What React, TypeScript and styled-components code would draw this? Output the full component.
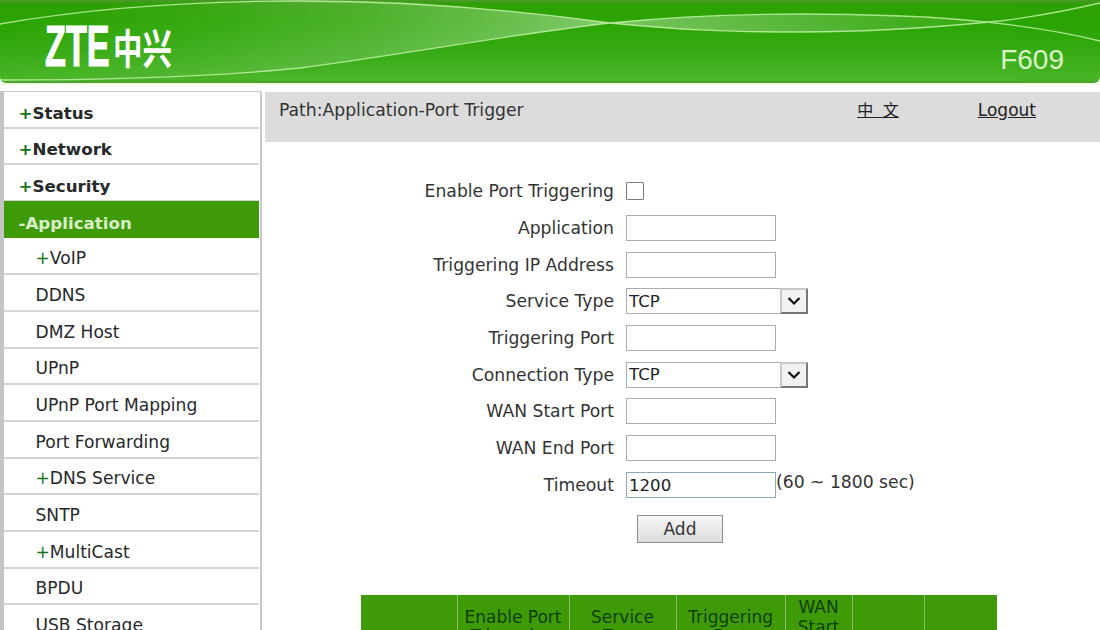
import React from "react";
import styled, { createGlobalStyle } from "styled-components";

const Global = createGlobalStyle`
  html, body { margin: 0; padding: 0; height: 630px; overflow: hidden; background: #fff; }
  body { font-family: "DejaVu Sans", Verdana, sans-serif; color: #222; }
`;
const Page = styled.div`width: 1100px; height: 630px; overflow: hidden;`;
const Banner = styled.header`
  position: relative; height: 83px; overflow: hidden;
  border-radius: 0 0 6px 6px;
  background: linear-gradient(180deg, #4c9a2a 0, #2fa106 4px, #2aa402 22px, #36aa14 50px, #4ab528 80px, #4a9e30 83px);
`;
const Tint = styled.div`height: 2px; background: #eefae4;`;
const Waves = styled.svg`position: absolute; inset: 0; width: 1100px; height: 83px;`;
const Logo = styled.div`
  position: absolute; left: 45px; top: 20px; display: flex; align-items: center; height: 52px; color: #fff;
`;
const LogoLatin = styled.span`
  display: block; width: 68px; font: 700 58px/52px "Liberation Sans", Arial, sans-serif;
  transform: scaleX(0.59); transform-origin: left center;
  -webkit-text-stroke: 1.2px #fff; white-space: nowrap;
`;
const LogoCjk = styled.span`
  display: block; width: 59px; font: 700 41px/52px "Noto Sans CJK SC", sans-serif;
  transform: scaleX(0.72); transform-origin: left center; white-space: nowrap;
`;
const Model = styled.div`
  position: absolute; right: 36px; top: 44px;
  font: 28px "Liberation Sans", Arial, sans-serif; color: #d9f5c8;
`;
const Body = styled.div`display: flex; margin-top: 6px; align-items: flex-start;`;
const Side = styled.nav`
  width: 256px; flex: none; margin-right: 3px;
  border-top: 1.5px solid #c9c9c9; border-left: 4px solid #c4c4c4; border-right: 2px solid #c9c9c9;
`;
const Item = styled.a<{ $top?: boolean; $on?: boolean }>`
  display: flex; align-items: center; box-sizing: border-box;
  height: ${p => (p.$on ? "37.17px" : "36.67px")};
  margin-top: ${p => (p.$on ? "-0.5px" : "0")};
  padding: ${p => (p.$on ? "6px" : p.$top ? "7px" : "5px")} 0 0 ${p => (p.$top ? "14.5px" : "31.5px")};
  margin-right: 1px;
  border-bottom: ${p => (p.$on ? "1px solid #fff" : "2px solid #d4d4d4")};
  background-clip: padding-box;
  font-size: ${p => (p.$top ? "16.7px" : "17.1px")};
  font-weight: ${p => (p.$top ? 700 : 400)};
  color: ${p => (p.$on ? "#d8efc8" : "#26282a")};
  background-color: ${p => (p.$on ? "#3f9a08" : "transparent")};
  white-space: nowrap;
`;
const Plus = styled.span`color: #17741b;`;
const Main = styled.main`flex: 1; min-width: 0;`;
const PathBar = styled.div`
  height: 50px; box-sizing: border-box; padding: 7px 64px 0 14px;
  margin-top: 1px;
  background: #dcdcdc; display: flex; align-items: baseline; font-size: 17.2px; color: #333;
`;
const PathText = styled.div`flex: 1;`;
const TopLink = styled.a<{ $gap: number }>`
  text-decoration: underline; color: #222; margin-left: ${p => p.$gap}px; white-space: pre;
  font-size: 17px; line-height: 20px;
`;
const LangLink = styled(TopLink)`
  font-family: "Noto Sans CJK SC", sans-serif; font-size: 16px; word-spacing: 6px;
`;
const Form = styled.form`margin-top: 31px; display: flex; flex-direction: column;`;
const Row = styled.div`
  display: grid; grid-template-columns: 349px auto; column-gap: 12px; height: 36.7px; align-items: center;
`;
const Label = styled.label`text-align: right; font-size: 17.2px; color: #333; white-space: nowrap;`;
const Control = styled.div`display: flex; align-items: center; font-size: 17.2px; color: #333;`;
const Check = styled.input`
  appearance: none; box-sizing: border-box; width: 18px; height: 18px; margin: 0;
  border: 1px solid #7a7a7a; background: #fff; border-radius: 1px;
`;
const Text = styled.input<{ $blue?: boolean }>`
  box-sizing: border-box; width: 150px; height: 26px; margin: 0; padding: 2px 2px 0; outline: 0;
  border: 1.5px solid ${p => (p.$blue ? "#8fa9bb" : "#a6adb3")}; background: #fff; color: #222;
  font: 16.6px "DejaVu Sans", Verdana, sans-serif;
`;
const SelectWrap = styled.div`position: relative; width: 182px; height: 26px;`;
const Select = styled.select`
  appearance: none; box-sizing: border-box; width: 100%; height: 100%; margin: 0; padding: 0 2px; outline: 0;
  border: 1.5px solid #a6adb3; border-radius: 0; background: #fff; color: #222;
  font: 16.6px "DejaVu Sans", Verdana, sans-serif;
`;
const Arrow = styled.span`
  position: absolute; right: 0; top: 0; width: 28px; height: 26px; box-sizing: border-box;
  display: flex; align-items: center; justify-content: center; pointer-events: none;
  background: #f2f2f2;
  border: 2px solid; border-color: #c8c8c8 #777 #777 #c8c8c8;
`;
const Hint = styled.span`margin-top: -5px; white-space: nowrap;`;
const AddRow = styled.div`padding: 12px 0 0 372px;`;
const AddButton = styled.button`
  display: block; box-sizing: border-box; width: 86px; height: 28px; padding: 0;
  border: 1px solid #8b8b8b; background: linear-gradient(180deg, #f7f7f7, #dcdcdc);
  font: 17px "DejaVu Sans", Verdana, sans-serif; color: #333;
`;
const Table = styled.table`
  margin: 52px 0 0 96px; width: 636px; table-layout: fixed; border-collapse: collapse;
`;
const Th = styled.th<{ $w: number }>`
  box-sizing: border-box;
  width: ${p => p.$w}px; background: #3f9a08; color: #0f3f0c;
  border-left: 1px solid #8cb878; font-size: 17px; font-weight: 400; line-height: 19.5px;
  padding: 3px 2px 1px; vertical-align: middle; height: 62px; white-space: pre-line;
  &:first-child { border-left: 0; }
`;

const dropdown = (
  <Arrow>
    <svg width="16" height="10" viewBox="0 0 16 10">
      <path d="M2.5 2 8 7.5 13.5 2" fill="none" stroke="#111" strokeWidth="2.2" />
    </svg>
  </Arrow>
);
const nav: [string, boolean][] = [
  ["VoIP", true], ["DDNS", false], ["DMZ Host", false], ["UPnP", false],
  ["UPnP Port Mapping", false], ["Port Forwarding", false], ["DNS Service", true],
  ["SNTP", false], ["MultiCast", true], ["BPDU", false], ["USB Storage", false],
];
const cols: [number, string][] = [
  [96, ""], [112, "Enable Port\nTriggering"], [107, "Service\nType"], [109, "Triggering\nPort"],
  [67, "WAN\nStart\nPort"], [72, ""], [73, ""],
];

export default function App() {
  return (
    <Page>
      <Global />
      <Banner>
        <Waves viewBox="0 0 1100 83">
          <defs>
            <linearGradient id="r1" x1="0" x2="1" y1="0" y2="0">
              <stop offset="0" stopColor="#fff" stopOpacity="0" />
              <stop offset="0.3" stopColor="#fff" stopOpacity="0.05" />
              <stop offset="0.6" stopColor="#fff" stopOpacity="0.16" />
              <stop offset="0.85" stopColor="#fff" stopOpacity="0.3" />
              <stop offset="1" stopColor="#fff" stopOpacity="0.42" />
            </linearGradient>
            <linearGradient id="r2" x1="0" x2="1" y1="0" y2="0">
              <stop offset="0" stopColor="#fff" stopOpacity="0.36" />
              <stop offset="0.5" stopColor="#fff" stopOpacity="0.2" />
              <stop offset="1" stopColor="#fff" stopOpacity="0.03" />
            </linearGradient>
          </defs>
          <path d="M0 24C80 10 200 0 300 0C400 0 500 8 610 23C520 33 400 55 300 68C200 78 100 80 0 80Z" fill="url(#r1)" />
          <path d="M610 23C700 14 800 12 900 16C940 18 970 20 1000 21C950 26 880 32 800 32C730 32 680 30 610 23Z" fill="url(#r2)" />
          <g fill="none" stroke="#c8f5ae" strokeWidth="1.3" opacity="0.8">
            <path d="M0 24C80 10 180 1 300 1C400 1 500 8 610 23C680 30 730 32 800 32C880 32 950 26 1000 21C1040 16 1070 10 1100 3" />
            <path d="M0 80C100 80 200 78 300 68C400 55 520 33 610 23C700 14 800 12 900 16C960 18 1040 26 1100 41" />
          </g>
        </Waves>
        <Logo>
          <LogoLatin>ZTE</LogoLatin>
          <LogoCjk>中兴</LogoCjk>
        </Logo>
        <Model>F609</Model>
      </Banner>
      <Tint />
      <Body>
        <Side>
          <Item $top><Plus>+</Plus>Status</Item>
          <Item $top><Plus>+</Plus>Network</Item>
          <Item $top><Plus>+</Plus>Security</Item>
          <Item $top $on>-Application</Item>
          {nav.map(([t, plus]) => (
            <Item key={t}>{plus && <Plus>+</Plus>}{t}</Item>
          ))}
        </Side>
        <Main>
          <PathBar>
            <PathText>Path:Application-Port Trigger</PathText>
            <LangLink $gap={0}>中 文</LangLink>
            <TopLink $gap={79}>Logout</TopLink>
          </PathBar>
          <Form>
            <Row><Label>Enable Port Triggering</Label><Control><Check type="checkbox" /></Control></Row>
            <Row><Label>Application</Label><Control><Text /></Control></Row>
            <Row><Label>Triggering IP Address</Label><Control><Text /></Control></Row>
            <Row><Label>Service Type</Label><Control><SelectWrap><Select defaultValue="TCP"><option>TCP</option></Select>{dropdown}</SelectWrap></Control></Row>
            <Row><Label>Triggering Port</Label><Control><Text /></Control></Row>
            <Row><Label>Connection Type</Label><Control><SelectWrap><Select defaultValue="TCP"><option>TCP</option></Select>{dropdown}</SelectWrap></Control></Row>
            <Row><Label>WAN Start Port</Label><Control><Text /></Control></Row>
            <Row><Label>WAN End Port</Label><Control><Text /></Control></Row>
            <Row><Label>Timeout</Label><Control><Text $blue defaultValue="1200" /><Hint>(60 ~ 1800 sec)</Hint></Control></Row>
            <AddRow><AddButton type="button">Add</AddButton></AddRow>
          </Form>
          <Table>
            <thead>
              <tr>{cols.map(([w, t], i) => <Th key={i} $w={w}>{t}</Th>)}</tr>
            </thead>
          </Table>
        </Main>
      </Body>
    </Page>
  );
}
